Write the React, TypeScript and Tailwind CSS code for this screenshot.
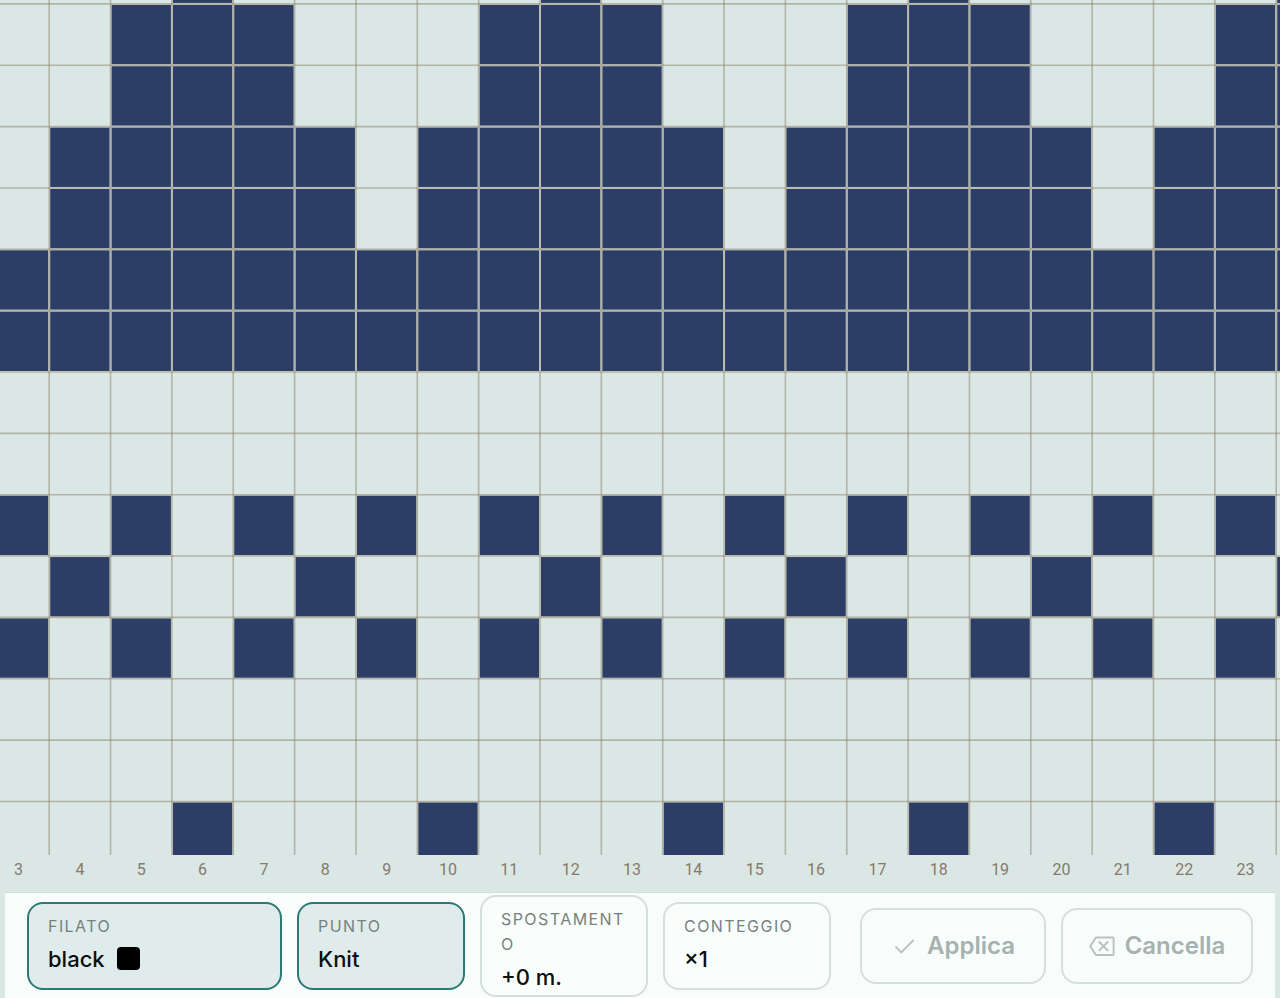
/**
 * Knitting chart editor - pattern canvas with the stitch toolbar below it
 */

import React, { useEffect, useState } from "react";
import { clsx } from "clsx";

const CELL = 61.35;
const ORIGIN_X = 49.2;
const ORIGIN_Y = 3.9;
const FIRST_COLUMN = 4;
const CHART_HEIGHT = 855;

// distance of a column from the centre of its tree (one tree every 6 stitches)
const fromTrunk = (c: number) => Math.min(c % 6, 6 - (c % 6));

const tip = (c: number) => fromTrunk(c) === 0;
const middle = (c: number) => fromTrunk(c) <= 1;
const base = (c: number) => fromTrunk(c) <= 2;
const solid = () => true;
const empty = () => false;
const odd = (c: number) => c % 2 === 1;
const dots = (c: number) => c % 4 === 0;
const shiftedDots = (c: number) => c % 4 === 2;

const rows = [
  tip,
  middle,
  middle,
  base,
  base,
  solid,
  solid,
  empty,
  empty,
  odd,
  dots,
  odd,
  empty,
  empty,
  shiftedDots,
];

const columnX = (c: number) => ORIGIN_X + (c - FIRST_COLUMN) * CELL;
const rowY = (r: number) => ORIGIN_Y + (r - 1) * CELL;

const useWindowWidth = () => {
  const [width, setWidth] = useState(window.innerWidth);

  useEffect(() => {
    const handleResize = () => setWidth(window.innerWidth);
    window.addEventListener("resize", handleResize);
    return () => window.removeEventListener("resize", handleResize);
  }, []);

  return width;
};

const PatternChart: React.FC = () => {
  const width = useWindowWidth();
  const count = Math.ceil((width - columnX(3)) / CELL);
  const columns = Array.from({ length: count }, (_, i) => i + 3);
  // a number is only drawn when it fits inside the window
  const numbered = columns.filter((c) => columnX(c) + CELL / 2 + 12 < width);

  return (
    <svg
      className="block h-[892px] w-full"
      role="img"
      aria-label="Schema a maglia"
    >
      <defs>
        <clipPath id="chart-area">
          <rect width="100%" height={CHART_HEIGHT} />
        </clipPath>
      </defs>

      <g clipPath="url(#chart-area)">
        {rows.map((isFilled, r) =>
          columns.filter(isFilled).map((c) => (
            <rect
              key={`${r}-${c}`}
              x={columnX(c) + 1}
              y={rowY(r) + 1}
              width={CELL - 2}
              height={CELL - 2}
              fill="#2c3e66"
            />
          ))
        )}

        <g stroke="#8c7f68" strokeOpacity={0.5} strokeWidth={1.6}>
          {columns.map((c) => (
            <line key={c} x1={columnX(c)} x2={columnX(c)} y1={0} y2="100%" />
          ))}
          {rows.map((_, r) => (
            <line key={r} x1={0} x2="100%" y1={rowY(r)} y2={rowY(r)} />
          ))}
        </g>
      </g>

      <g
        className="font-['Roboto',sans-serif] text-[16px]"
        fill="#857a6d"
        textAnchor="middle"
      >
        {numbered.map((c) => (
          <text key={c} x={columnX(c) + CELL / 2} y={875}>
            {c}
          </text>
        ))}
      </g>
    </svg>
  );
};

interface FieldButtonProps {
  label: string;
  value: string;
  active?: boolean;
  swatch?: boolean;
  className?: string;
}

const FieldButton: React.FC<FieldButtonProps> = ({
  label,
  value,
  active = false,
  swatch = false,
  className,
}) => (
  <button
    type="button"
    className={clsx(
      "flex min-h-[88px] flex-col items-start rounded-2xl border-2 px-[19px] pt-2.5 pb-1 text-left",
      active ? "border-[#2c7a78] bg-[#e0ebeb]" : "border-[#d5dfdd] bg-[#f9fdfc]",
      className
    )}
  >
    <span className="w-full text-[16px] leading-[25px] tracking-[0.09em] break-all text-[#75827f]">
      {label}
    </span>
    <span className="mt-1.5 flex items-center gap-3 text-[22px] leading-[28px] font-medium text-[#0b0f0e]">
      {value}
      {swatch && <span className="h-[23px] w-[23px] rounded bg-black" />}
    </span>
  </button>
);

interface ActionButtonProps {
  label: string;
  children: React.ReactNode;
  className?: string;
}

const ActionButton: React.FC<ActionButtonProps> = ({
  label,
  children,
  className,
}) => (
  <button
    type="button"
    disabled
    className={clsx(
      "flex h-[76px] items-center justify-center gap-2.5 rounded-2xl border-2 border-[#d5dfdd] text-[24px] font-semibold text-[#a6b2af]",
      className
    )}
  >
    {children}
    {label}
  </button>
);

const Toolbar: React.FC = () => (
  <div className="mx-[5px] flex h-[106px] items-center gap-[15px] border-t border-[#d0deda] bg-[#f8fcfb] px-[22px]">
    <FieldButton
      label="FILATO"
      value="black"
      active
      swatch
      className="min-w-0 flex-1"
    />
    <FieldButton label="PUNTO" value="Knit" active className="w-[168px]" />
    <FieldButton label="SPOSTAMENTO" value="+0 m." className="w-[168px]" />
    <FieldButton label="CONTEGGIO" value="×1" className="w-[168px]" />

    <div className="ml-3.5 flex gap-[15px]">
      <ActionButton label="Applica" className="w-[186px]">
        <svg
          className="h-[26px] w-[26px]"
          viewBox="0 0 26 26"
          fill="none"
          stroke="#b7c2bf"
          strokeWidth={1.8}
        >
          <path d="M4.5 13.6 L10.3 19.4 L22.6 7" />
        </svg>
      </ActionButton>
      <ActionButton label="Cancella" className="w-[192px]">
        <svg
          className="h-[26px] w-[26px]"
          viewBox="0 0 26 26"
          fill="none"
          stroke="#b7c2bf"
          strokeWidth={1.9}
          strokeLinejoin="round"
        >
          <path d="M7.6 4.5 H24 Q24.6 4.5 24.6 5.1 V21.4 Q24.6 22 24 22 H7.6 Q7 22 6.6 21.4 L1.2 13.3 L6.6 5.1 Q7 4.5 7.6 4.5 Z" />
          <path d="M9.8 8.5 L19.2 17.9 M19.2 8.5 L9.8 17.9" />
        </svg>
      </ActionButton>
    </div>
  </div>
);

export default function App() {
  return (
    <main className="min-h-screen overflow-hidden bg-[#dbe7e4] font-['Inter',sans-serif]">
      <PatternChart />
      <Toolbar />
    </main>
  );
}
